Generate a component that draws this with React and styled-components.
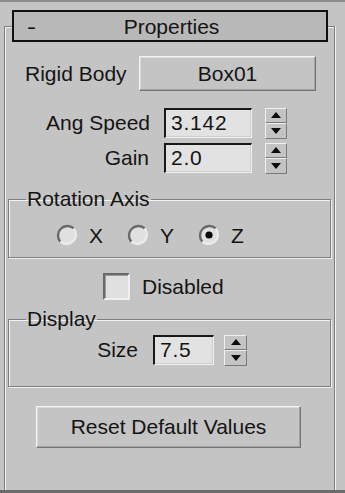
import React from 'react';
import styled, { createGlobalStyle } from 'styled-components';

const GlobalStyle = createGlobalStyle`
  html, body {
    margin: 0;
    padding: 0;
    background: #c4c4c4;
  }
  body {
    font-family: "Liberation Sans", Arial, sans-serif;
    color: #141414;
  }
`;

const Page = styled.div`
  width: 345px;
  height: 493px;
  box-sizing: border-box;
  border-top: 2px solid #8c8c8c;
  border-bottom: 3px solid #6c6c6c;
  padding: 8px 10px 0 4px;
  display: flex;
  flex-direction: column;
  overflow: hidden;
  font-size: 21px;
`;

// rollout with its etched frame behind the title bar
const Rollout = styled.div`
  position: relative;
  flex: 1;
  display: flex;
  flex-direction: column;

  &::before {
    content: '';
    position: absolute;
    top: 16px;
    left: 0;
    right: 0;
    bottom: -2px;
    border: 1px solid #7e7e7e;
    border-bottom: none;
    box-shadow: inset 1px 1px 0 #f2f2f2, 1px 0 0 #f2f2f2;
  }
`;

const TitleBar = styled.div`
  position: relative;
  margin: 0 7px 0 8px;
  height: 32px;
  box-sizing: border-box;
  border: 2px solid #101010;
  background: #b8b8b8;
  display: grid;
  grid-template-columns: 36px 1fr 36px;
  align-items: center;
  line-height: 1;
`;

const Collapse = styled.span`
  padding-left: 10px;
  display: inline-block;
  transform: scaleX(1.3);
  transform-origin: left center;
`;

const Title = styled.span`
  text-align: center;
  padding-left: 3px;
`;

const Body = styled.div`
  position: relative;
  padding: 0 4px;
  display: flex;
  flex-direction: column;
`;

const Row = styled.div`
  display: flex;
  align-items: center;
  height: ${({ $h }) => $h}px;
  margin-top: ${({ $mt }) => $mt || 0}px;
  padding-left: ${({ $pl }) => $pl || 0}px;
`;

const Label = styled.span`
  flex: 0 0 ${({ $w }) => $w}px;
  box-sizing: border-box;
  text-align: ${({ $right }) => ($right ? 'right' : 'left')};
  padding-left: ${({ $pl }) => $pl || 0}px;
  white-space: nowrap;
`;

const RaisedButton = styled.button`
  box-sizing: border-box;
  width: ${({ $w }) => $w}px;
  height: ${({ $h }) => $h}px;
  margin-left: ${({ $ml }) => $ml || 0}px;
  margin-top: ${({ $mt }) => $mt || 0}px;
  padding: 0;
  background: #c4c4c4;
  border: 1px solid;
  border-color: #f4f4f4 #747474 #747474 #f4f4f4;
  box-shadow: inset -1px -1px 0 #a2a2a2, inset 1px 1px 0 #dadada;
  font: inherit;
  color: inherit;
`;

const Field = styled.input`
  box-sizing: border-box;
  width: ${({ $w }) => $w}px;
  height: 30px;
  margin-left: ${({ $ml }) => $ml}px;
  padding: 0 0 2px 5px;
  background: #e2e2e2;
  border-style: solid;
  border-width: 2px 1px 1px 2px;
  border-color: #181818 #f0f0f0 #f0f0f0 #181818;
  box-shadow: inset -1px -1px 0 #cfcfcf;
  font: inherit;
  letter-spacing: 0.8px;
  color: inherit;
  outline: none;
`;

const Spinner = styled.div`
  width: ${({ $w }) => $w}px;
  height: 31px;
  margin-left: ${({ $ml }) => $ml}px;
  display: flex;
  flex-direction: column;
`;

const SpinHalf = styled.div`
  flex: 1;
  box-sizing: border-box;
  border: 1px solid;
  border-color: #f0f0f0 #7a7a7a #7a7a7a #f0f0f0;
  display: flex;
  align-items: center;
  justify-content: center;
`;

const Group = styled.fieldset`
  margin: ${({ $mt }) => $mt}px 0 0 0;
  padding: 0 0 ${({ $pb }) => $pb}px 0;
  border: 1px solid #7e7e7e;
  box-shadow: inset 1px 1px 0 #f2f2f2, 1px 1px 0 #f2f2f2;
  min-width: 0;
`;

const Legend = styled.legend`
  margin-left: 17px;
  padding: 0 1px;
  line-height: 24px;
`;

const RadioRow = styled.div`
  display: flex;
  align-items: center;
  height: 22px;
  margin-top: 13px;
  padding-left: 47px;
`;

const RadioItem = styled.label`
  display: flex;
  align-items: center;
  gap: 11px;
  margin-right: 24px;
  line-height: 1;
`;

const CheckBox = styled.span`
  box-sizing: border-box;
  width: 27px;
  height: 27px;
  margin-right: 12px;
  background: #e0e0e0;
  border: 2px solid;
  border-color: #6a6a6a #f0f0f0 #f0f0f0 #6a6a6a;
  box-shadow: inset 1px 1px 0 #9a9a9a;
`;

const Arrow = ({ up }) => (
  <svg width="10" height="6" viewBox="0 0 10 6">
    <path d={up ? 'M0 6 L5 0 L10 6 Z' : 'M0 0 L5 6 L10 0 Z'} fill="#0c0c0c" />
  </svg>
);

const Spin = ({ w, ml }) => (
  <Spinner $w={w} $ml={ml}>
    <SpinHalf><Arrow up /></SpinHalf>
    <SpinHalf><Arrow /></SpinHalf>
  </Spinner>
);

const Radio = ({ checked }) => (
  <svg width="22" height="22" viewBox="0 0 22 22">
    <circle cx="11" cy="11" r="9.5" fill="#e0e0e0" />
    <path d="M4.3 17.7 A9.5 9.5 0 0 1 17.7 4.3" stroke="#686868" strokeWidth="2.4" fill="none" />
    <path d="M17.7 4.3 A9.5 9.5 0 0 1 4.3 17.7" stroke="#ededed" strokeWidth="2" fill="none" />
    {checked && <circle cx="11" cy="11" r="3.6" fill="#000" />}
  </svg>
);

const axes = [
  { name: 'X', checked: false },
  { name: 'Y', checked: false },
  { name: 'Z', checked: true },
];

export default function App() {
  return (
    <Page>
      <GlobalStyle />
      <Rollout>
        <TitleBar>
          <Collapse>-</Collapse>
          <Title>Properties</Title>
          <span />
        </TitleBar>
        <Body>
          <Row $h={35} $mt={14}>
            <Label $w={131} $pl={17}>Rigid Body</Label>
            <RaisedButton $w={177} $h={35}>Box01</RaisedButton>
          </Row>
          <Row $h={30} $mt={17}>
            <Label $w={142} $right>Ang Speed</Label>
            <Field $w={88} $ml={14} defaultValue="3.142" readOnly />
            <Spin w={22} ml={13} />
          </Row>
          <Row $h={30} $mt={5}>
            <Label $w={141} $right>Gain</Label>
            <Field $w={88} $ml={15} defaultValue="2.0" readOnly />
            <Spin w={22} ml={13} />
          </Row>
          <Group $mt={14} $pb={11}>
            <Legend>Rotation Axis</Legend>
            <RadioRow>
              {axes.map((a) => (
                <RadioItem key={a.name}>
                  <Radio checked={a.checked} />
                  {a.name}
                </RadioItem>
              ))}
            </RadioRow>
          </Group>
          <Row $h={27} $mt={15} $pl={95}>
            <CheckBox />
            Disabled
          </Row>
          <Group $mt={7} $pb={21}>
            <Legend>Display</Legend>
            <Row $h={30} $mt={4}>
              <Label $w={129} $right>Size</Label>
              <Field $w={61} $ml={15} defaultValue="7.5" readOnly />
              <Spin w={23} ml={10} />
            </Row>
          </Group>
          <RaisedButton $w={265} $h={42} $ml={28} $mt={19}>Reset Default Values</RaisedButton>
        </Body>
      </Rollout>
    </Page>
  );
}
